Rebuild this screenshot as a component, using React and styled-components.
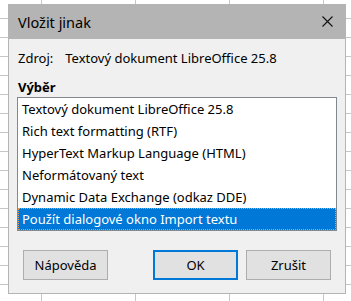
import React from "react";
import styled, { createGlobalStyle } from "styled-components";

const Global = createGlobalStyle`
  html, body { margin: 0; padding: 0; }
  body {
    width: 351px;
    height: 301px;
    overflow: hidden;
    background-color: #ffffff;
    background-image:
      linear-gradient(to right, #c6c6c6 0, #c6c6c6 1px, transparent 1px),
      linear-gradient(to bottom, transparent 18px, #c6c6c6 18px, #c6c6c6 19px, transparent 19px);
    background-size: 94px 100%, 100% 19px;
    background-position: 41px 0, 0 0;
    font-family: "Noto Sans", "Open Sans", sans-serif;
    font-size: 13px;
    color: #000;
  }
  #root { display: block; }
`;

const Dialog = styled.div`
  box-sizing: border-box;
  margin: 4px 0 0 8px;
  width: 338px;
  height: 290px;
  border: 1px solid #b4b4b4;
  border-top: none;
  background: #f0f0f0;
  display: flex;
  flex-direction: column;
`;

const TitleBar = styled.div`
  height: 35px;
  margin: 0 -1px;
  background: #b4b4b4;
  display: flex;
  align-items: center;
  justify-content: space-between;
  padding: 0 13px 0 10px;
  font-size: 14.5px;
`;

const CloseButton = styled.div`
  width: 12px;
  height: 12px;
  display: flex;
  align-items: center;
  justify-content: center;
`;

const Body = styled.div`
  flex: 1;
  display: flex;
  flex-direction: column;
  padding: 9px 8px 0 8px;
`;

const SourceRow = styled.div`
  display: flex;
  gap: 12px;
  height: 20px;
  align-items: center;
  padding-left: 1px;
`;

const SectionLabel = styled.div`
  margin-top: 10px;
  font-weight: 700;
  height: 18px;
  line-height: 18px;
  padding-left: 1px;
`;

const ListBox = styled.div`
  margin-top: 1px;
  border: 1px solid #828790;
  background: #fff;
  display: flex;
  flex-direction: column;
`;

const ListItem = styled.div`
  box-sizing: border-box;
  height: 22px;
  line-height: 20px;
  padding-left: 3px;
  white-space: nowrap;
  background: ${(p) => (p.$selected ? "#0078d7" : "transparent")};
  color: ${(p) => (p.$selected ? "#fff" : "#000")};
  border: 1px ${(p) => (p.$selected ? "dotted #f59a45" : "solid transparent")};
`;

const ButtonRow = styled.div`
  margin-top: auto;
  margin-bottom: 13px;
  padding: 0 6px;
  display: flex;
  justify-content: space-between;
`;

const ButtonGroup = styled.div`
  display: flex;
  gap: 8px;
`;

const Button = styled.div`
  box-sizing: border-box;
  width: 85px;
  height: 30px;
  display: flex;
  align-items: center;
  justify-content: center;
  background: #e1e1e1;
  border: ${(p) => (p.$default ? "2px solid #0078d7" : "1px solid #adadad")};
`;

const items = [
  "Textový dokument LibreOffice 25.8",
  "Rich text formatting (RTF)",
  "HyperText Markup Language (HTML)",
  "Neformátovaný text",
  "Dynamic Data Exchange (odkaz DDE)",
  "Použít dialogové okno Import textu",
];

export default function App() {
  return (
    <>
      <Global />
      <Dialog>
        <TitleBar>
          <span>Vložit jinak</span>
          <CloseButton>
            <svg width="11" height="11" viewBox="0 0 11 11">
              <path d="M0.5 0.5 L10.5 10.5 M10.5 0.5 L0.5 10.5" stroke="#111" strokeWidth="1.1" fill="none" />
            </svg>
          </CloseButton>
        </TitleBar>
        <Body>
          <SourceRow>
            <span>Zdroj:</span>
            <span>Textový dokument LibreOffice 25.8</span>
          </SourceRow>
          <SectionLabel>Výběr</SectionLabel>
          <ListBox>
            {items.map((t, i) => (
              <ListItem key={t} $selected={i === items.length - 1}>
                {t}
              </ListItem>
            ))}
          </ListBox>
          <ButtonRow>
            <Button>Nápověda</Button>
            <ButtonGroup>
              <Button $default>OK</Button>
              <Button>Zrušit</Button>
            </ButtonGroup>
          </ButtonRow>
        </Body>
      </Dialog>
    </>
  );
}
